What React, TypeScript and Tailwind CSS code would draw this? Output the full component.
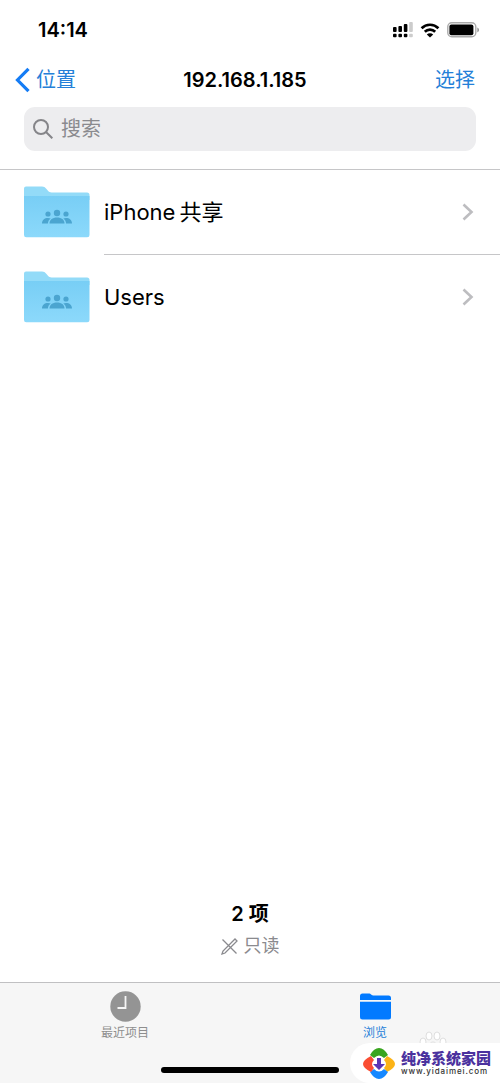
import { ReactNode } from 'react'

const folders = [
  { name: 'iPhone', suffix: '共享' },
  { name: 'Users', suffix: '' },
]

function StatusBar() {
  return (
    <div className="flex h-[60px] items-center justify-between pl-[38px] pr-5">
      <span className="text-[20px] leading-6 font-semibold">14:14</span>
      <div className="flex items-center gap-[7px]">
        {/* dual sim signal */}
        <svg width="20" height="16" viewBox="0 0 20 16">
          <g fill="#000">
            <rect x="0" y="5" width="3.6" height="5" rx="1" />
            <rect x="5.4" y="4" width="3.6" height="6" rx="1" />
            <rect x="10.8" y="2" width="3.6" height="8" rx="1" />
            <rect x="0" y="11.7" width="3.6" height="3.6" rx="1" />
            <rect x="5.4" y="11.7" width="3.6" height="3.6" rx="1" />
            <rect x="10.8" y="11.7" width="3.6" height="3.6" rx="1" />
          </g>
          <g fill="#ccc">
            <rect x="16.2" y="0" width="3.6" height="10" rx="1" />
            <rect x="16.2" y="11.7" width="3.6" height="3.6" rx="1" />
          </g>
        </svg>
        <svg width="20" height="15" viewBox="0 0 20 15">
          <path d="M1.6 5.2a12 12 0 0 1 16.8 0M4.8 8.8a7.4 7.4 0 0 1 10.4 0" fill="none" stroke="#000" strokeWidth="2.7" />
          <path d="M10 14.6 6.8 11.5a4.6 4.6 0 0 1 6.4 0z" />
        </svg>
        <svg width="33" height="16" viewBox="0 0 33 16">
          <rect x="0.8" y="0.8" width="28" height="14" rx="4" fill="none" stroke="#aaa" strokeWidth="1.4" />
          <rect x="2.4" y="2.4" width="24" height="10.8" rx="2" />
          <path d="M30.4 5.4v4.8c2-.8 2-4 0-4.8z" fill="#888" />
        </svg>
      </div>
    </div>
  )
}

function SharedFolderIcon() {
  return (
    <svg width="66" height="52" viewBox="0 0 66 52" className="shrink-0">
      <defs>
        <linearGradient id="folder" x1="0" y1="0" x2="0" y2="1">
          <stop offset="0" stopColor="#78cef5" />
          <stop offset="1" stopColor="#8cd9fb" />
        </linearGradient>
      </defs>
      <path d="M0 12V2.5Q0 .5 2 .5h16c2 0 3 .7 4 2l2 2.3c.8 1.1 2 1.7 3.500 1.700H63q2.500 0 2.500 2.500v5H0z" fill="#93dbf8" />
      <path d="M0 10h65.500v39q0 2.300-2.300 2.300H2.300Q0 51.300 0 49z" fill="url(#folder)" />
      <g fill="#4ba5d0">
        <circle cx="24" cy="28" r="2.600" />
        <circle cx="33" cy="27" r="3.200" />
        <circle cx="42" cy="28" r="2.600" />
        <path d="M18 37.500c0-3.500 2.500-5.500 6-5.500 1 0 2 .2 2.700.6-1.700 1.200-2.600 2.800-2.800 4.900z" />
        <path d="M48 37.500c0-3.500-2.500-5.500-6-5.500-1 0-2 .2-2.700.6 1.700 1.200 2.600 2.800 2.800 4.900z" />
        <path d="M25.500 37.500c0-3.700 3-6 7.500-6s7.500 2.300 7.500 6z" />
      </g>
    </svg>
  )
}

function Chevron() {
  return (
    <svg width="12" height="18" viewBox="0 0 12 18">
      <path d="m1.500 1.500 8 7.500-8 7.500" fill="none" stroke="#bdbdc0" strokeWidth="2.600" />
    </svg>
  )
}

function Tab({ icon, label, className }: { icon: ReactNode; label: string; className: string }) {
  return (
    <div className={`flex flex-1 flex-col items-center pt-[7px] ${className}`}>
      <div className="flex h-8 items-center">{icon}</div>
      <span className="mt-[3px] text-[12px] leading-4">{label}</span>
    </div>
  )
}

function SiteBadge() {
  return (
    <div className="absolute right-0 bottom-0 flex h-10 w-[150px] items-center rounded-l-[20px] bg-white pl-[13px]">
      <svg width="32" height="33" viewBox="0 0 32 33" className="shrink-0">
        <path d="M7 8Q11 1 16 1t9 7l-4 3q-5-5-10 0z" fill="#39a51f" />
        <path d="M24 9q8 4 8 8t-8 8l-3-4q4-4 0-8z" fill="#fcb316" />
        <path d="M25 25q-4 7-9 7t-9-7l4-3q5 5 10 0z" fill="#1688ff" />
        <path d="M8 25q-8-4-8-8t8-8l3 4q-4 4 0 8z" fill="#fa4d32" />
        <path d="M14 11h4v6h4l-6 6-6-6h4z" fill="#5b36b5" />
      </svg>
      <div className="ml-[6px] flex flex-col">
        <span className="text-[15px] leading-[17px] font-black whitespace-nowrap text-[#4b329e]">纯净系统家园</span>
        <span className="text-[8px] leading-[9px] font-medium tracking-[0.9px] text-[#333]">www.yidaimei.com</span>
      </div>
    </div>
  )
}

export default function App() {
  return (
    <div className="relative flex h-[1083px] w-[500px] flex-col overflow-hidden bg-white font-['Inter','Noto_Sans_CJK_SC',sans-serif] text-black">
      <StatusBar />

      <header className="h-[110px] border-b border-[#c6c6c8]">
        <div className="grid h-10 grid-cols-3 items-center pr-[25px] pl-[15px] text-[20px] leading-6">
          <div className="flex items-center gap-[6px] text-[#2480d8]">
            <svg width="15" height="26" viewBox="0 0 15 26">
              <path d="M13.500 1.800 2.500 13l11 11.200" fill="none" stroke="#157cf5" strokeWidth="3.200" />
            </svg>
            位置
          </div>
          <h1 className="text-center font-semibold whitespace-nowrap">192.168.1.185</h1>
          <div className="text-right text-[#2480d8]">选择</div>
        </div>
        <div className="mx-6 mt-[7px] flex h-11 items-center gap-2 rounded-[11px] bg-[#ededef] pl-[9px] text-[20px] text-[#8a8a8e]">
          <svg width="20" height="20" viewBox="0 0 20 20" fill="none" stroke="#858589" strokeWidth="2">
            <circle cx="8" cy="8" r="7" />
            <path d="m13 13 6.300 6.300" />
          </svg>
          搜索
        </div>
      </header>

      <main className="flex-1">
        {folders.map((folder, i) => (
          <div key={folder.name} className="flex h-[84.500px] items-center pl-6">
            <SharedFolderIcon />
            <div className={`ml-[14px] flex h-full flex-1 items-center justify-between pr-[26px] ${i === 0 ? 'border-b border-[#c6c6c8]' : ''}`}>
              <span className="flex gap-1 text-[22px] leading-7">
                {folder.name}
                {folder.suffix && <span>{folder.suffix}</span>}
              </span>
              <Chevron />
            </div>
          </div>
        ))}
      </main>

      <div className="flex flex-col items-center pb-[22px]">
        <p className="text-[20px] leading-7 font-semibold">2 项</p>
        <p className="mt-1 flex items-center gap-[6px] text-[18px] leading-7 text-[#8a8a8e]">
          <svg width="17" height="17" viewBox="0 0 17 17" fill="none" stroke="#8a8a8e" strokeWidth="1.300">
            <path d="m1.500 1.500 14 14M1 16l1-3L14 1l2 2L4 15z" />
          </svg>
          只读
        </p>
      </div>

      <footer className="flex h-[101px] border-t border-[#c0c0c2] bg-[#f6f6f6]">
        <Tab
          label="最近项目"
          className="text-[#8e8e8e]"
          icon={
            <svg width="31" height="31" viewBox="0 0 31 31">
              <circle cx="15.500" cy="15.500" r="15.200" fill="#949494" />
              <path d="M15.500 5v12H7.500" fill="none" stroke="#f6f6f6" strokeWidth="1.800" />
            </svg>
          }
        />
        <Tab
          label="浏览"
          className="text-[#2480d8]"
          icon={
            <svg width="31" height="27" viewBox="0 0 31 27" fill="#027aff">
              <path d="M0 7V3Q0 .5 2.500.5h6c1.500 0 2 .4 3 1.200.7.600 1.300.8 2.500.8h14.500q2.500 0 2.500 2.500v2z" />
              <path d="M0 8.700h31v15.300q0 2.500-2.500 2.500h-26Q0 26.500 0 24z" />
            </svg>
          }
        />
      </footer>

      <div className="absolute bottom-[10px] left-[161px] h-[6px] w-[178px] rounded-full bg-black" />
      {/* faint paw mark behind the badge */}
      <svg width="66" height="30" viewBox="0 0 66 30" className="absolute right-[30px] bottom-[25px]" fill="#fff" stroke="#dedede" strokeWidth="1">
        <ellipse cx="19" cy="14" rx="3" ry="4" />
        <ellipse cx="25" cy="8" rx="3" ry="4" />
        <ellipse cx="33" cy="8" rx="3" ry="4" />
        <ellipse cx="39" cy="14" rx="3" ry="4" />
        <path d="M29 14c-4 0-5 6-9 8v6h18v-6c-4-2-5-8-9-8z" />
      </svg>
      <SiteBadge />
    </div>
  )
}
